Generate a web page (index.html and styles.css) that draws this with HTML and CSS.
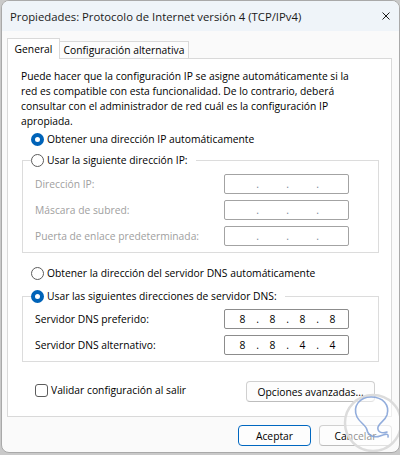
FILE: index.html
```html
<!DOCTYPE html>
<html lang="es">
<head>
<meta charset="utf-8">
<title>Propiedades: Protocolo de Internet versión 4 (TCP/IPv4)</title>
<link rel="stylesheet" href="styles.css">
</head>
<body>
<div class="window">
  <div class="titlebar">
    <span class="title">Propiedades: Protocolo de Internet versión 4 (TCP/IPv4)</span>
    <svg class="close" width="8" height="8" viewBox="0 0 8 8"><path d="M0.5 0.5 L7.5 7.5 M7.5 0.5 L0.5 7.5" stroke="#1a1a1a" stroke-width="1" fill="none"/></svg>
  </div>
  <div class="main">
    <div class="tabs">
      <div class="tab active">General</div>
      <div class="tab alt">Configuración alternativa</div>
    </div>
    <div class="panel">
      <p class="intro">Puede hacer que la configuración IP se asigne automáticamente si la<br>red es compatible con esta funcionalidad. De lo contrario, deberá<br>consultar con el administrador de red cuál es la configuración IP<br>apropiada.</p>
      <div class="opt first"><span class="radio on"></span><span>Obtener una dirección IP automáticamente</span></div>
      <div class="group g1">
        <div class="legend"><span class="radio"></span><span>Usar la siguiente dirección IP:</span></div>
        <div class="field disabled"><span>Dirección IP:</span><div class="ipbox"><span class="oct"></span><span class="dot">.</span><span class="oct"></span><span class="dot">.</span><span class="oct"></span><span class="dot">.</span><span class="oct"></span></div></div>
        <div class="field disabled"><span>Máscara de subred:</span><div class="ipbox"><span class="oct"></span><span class="dot">.</span><span class="oct"></span><span class="dot">.</span><span class="oct"></span><span class="dot">.</span><span class="oct"></span></div></div>
        <div class="field disabled"><span>Puerta de enlace predeterminada:</span><div class="ipbox"><span class="oct"></span><span class="dot">.</span><span class="oct"></span><span class="dot">.</span><span class="oct"></span><span class="dot">.</span><span class="oct"></span></div></div>
      </div>
      <div class="opt dns"><span class="radio"></span><span>Obtener la dirección del servidor DNS automáticamente</span></div>
      <div class="group g2">
        <div class="legend"><span class="radio on"></span><span>Usar las siguientes direcciones de servidor DNS:</span></div>
        <div class="field"><span>Servidor DNS preferido:</span><div class="ipbox"><span class="oct">8</span><span class="dot">.</span><span class="oct">8</span><span class="dot">.</span><span class="oct">8</span><span class="dot">.</span><span class="oct">8</span></div></div>
        <div class="field"><span>Servidor DNS alternativo:</span><div class="ipbox"><span class="oct">8</span><span class="dot">.</span><span class="oct">8</span><span class="dot">.</span><span class="oct">4</span><span class="dot">.</span><span class="oct">4</span></div></div>
      </div>
      <div class="checkrow">
        <div class="check"><span class="box"></span><span>Validar configuración al salir</span></div>
        <div class="btn adv">Opciones avanzadas...</div>
      </div>
    </div>
    <div class="footer">
      <div class="btn primary">Aceptar</div>
      <div class="btn">Cancelar</div>
    </div>
  </div>
  <svg class="watermark" width="62" height="62" viewBox="0 0 62 62">
    <circle cx="31" cy="31" r="28" fill="rgba(255,255,255,0.55)" stroke="#dcdcdc" stroke-width="2.5"/>
    <path d="M15 25 C10 14 18 5 29 5 C41 5 48 13 45 23 C43 29 37 31 36 35 C35 40 40 42 45 40 M15 25 C18 31 24 33 25 38 C26 44 33 46 38 44 C43 42 47 41 46 45" fill="none" stroke="#7f9fd6" stroke-width="1.6" stroke-linecap="round" opacity="0.85"/>
  </svg>
</div>
</body>
</html>
```
FILE: styles.css
```css
html, body {
  margin: 0;
  padding: 0;
}
body {
  background: #c9c9c9;
  font-family: "Open Sans", "Noto Sans", sans-serif;
  font-size: 10.3px;
  color: #000;
  width: 400px;
  height: 455px;
  overflow: hidden;
}
.window {
  position: relative;
  margin-left: 1px;
  width: 399px;
  height: 453px;
  box-sizing: border-box;
  border: 1px solid #a9a9a9;
  border-radius: 8px;
  background: #fafafa;
  overflow: hidden;
  display: flex;
  flex-direction: column;
}
.titlebar {
  height: 30px;
  background: #eff4f9;
  display: flex;
  align-items: center;
  justify-content: space-between;
  padding: 0 9px 0 8px;
  flex: none;
}
.title {
  font-size: 11.3px;
  color: #1a1a1a;
}
.close { display: block; }
.main {
  padding: 7px 7px 0 5px;
}
.tabs {
  display: flex;
  align-items: flex-end;
  height: 20px;
}
.tab {
  box-sizing: border-box;
  height: 17px;
  border: 1px solid #d9d9d9;
  border-bottom: none;
  background: #fcfcfc;
  display: flex;
  align-items: center;
  justify-content: center;
  white-space: nowrap;
}
.tab.active {
  position: relative;
  z-index: 1;
  height: 21px;
  margin-bottom: -1px;
  width: 53px;
  background: #fff;
}
.tab.alt {
  width: 130px;
  margin-left: -1px;
}
.panel {
  background: #fff;
  border: 1px solid #d9d9d9;
  padding: 10px 0 14px 0;
}
.intro {
  margin: 0;
  padding-left: 13px;
  line-height: 15px;
}
.opt {
  display: flex;
  align-items: center;
  gap: 3px;
  height: 16px;
  margin-left: 23px;
}
.opt.first { margin-top: 2px; }
.opt.dns { margin-top: 12px; }
.radio {
  box-sizing: border-box;
  width: 13px;
  height: 13px;
  border-radius: 50%;
  border: 1px solid #5c5c5c;
  background: #fff;
  flex: none;
}
.radio.on {
  border: 4px solid #0063b8;
}
.group {
  border: 1px solid #dcdcdc;
  margin: 0 12px 0 14px;
  padding: 0 29px 6px 12px;
}
.g1 { margin-top: 13px; }
.g2 { margin-top: 15px; }
.legend {
  display: flex;
  align-items: center;
  gap: 3px;
  width: fit-content;
  height: 16px;
  margin: -9px 0 0 -4px;
  padding-right: 8px;
  background: #fff;
}
.g1 .legend { margin-bottom: 6px; }
.g2 .legend { margin-bottom: 5px; }
.field {
  display: flex;
  align-items: center;
  justify-content: space-between;
  height: 20px;
}
.field + .field { margin-top: 6px; }
.field.disabled > span { color: #a0a0a0; }
.ipbox {
  box-sizing: border-box;
  width: 125px;
  height: 20px;
  border: 1px solid #8c8c8c;
  border-radius: 2px;
  background: #fff;
  display: flex;
  align-items: center;
  padding-left: 5px;
}
.disabled .ipbox { border-color: #a3a3a3; }
.oct {
  width: 25px;
  text-align: center;
}
.dot {
  width: 5px;
  text-align: center;
}
.disabled .dot { color: #7a8a9a; }
.checkrow {
  display: flex;
  align-items: center;
  justify-content: space-between;
  height: 21px;
  margin: 19px 16px 0 27px;
}
.check {
  display: flex;
  align-items: center;
  gap: 3px;
  margin-top: -3px;
}
.box {
  box-sizing: border-box;
  width: 13px;
  height: 13px;
  border: 1px solid #5c5c5c;
  border-radius: 3px;
  background: #fff;
}
.btn {
  box-sizing: border-box;
  height: 21px;
  border: 1px solid #d0d0d0;
  border-bottom-color: #bdbdbd;
  border-radius: 4px;
  background: #fdfdfd;
  display: flex;
  align-items: center;
  justify-content: center;
  width: 73px;
}
.btn.adv { width: 129px; }
.btn.primary {
  border-color: #0067c0;
}
.footer {
  display: flex;
  justify-content: flex-end;
  gap: 8px;
  margin-top: 8px;
}
.watermark {
  position: absolute;
  left: 340px;
  top: 391px;
}
```
